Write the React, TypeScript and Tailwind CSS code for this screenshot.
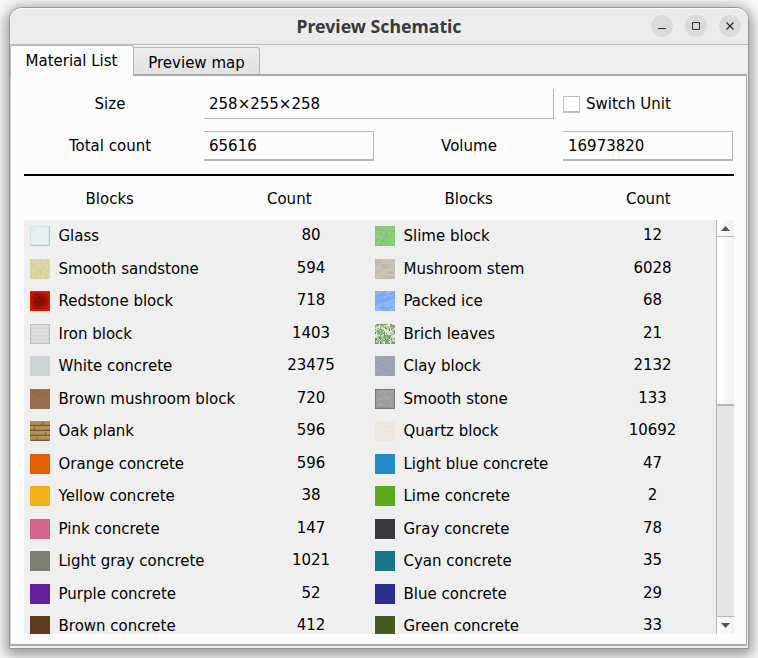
import React from "react";

type Texture = { palette: string[]; sx?: number; sy?: number; slant?: number; border?: string; kind?: string };
type Block = { name: string; count: number; color: string; texture?: Texture };

const left: Block[] = [
  { name: "Glass", count: 80, color: "#eceff0", texture: { palette: ["#eceff0"], kind: "glass" } },
  { name: "Smooth sandstone", count: 594, color: "#dfd4a6", texture: { palette: ["#e1d7a9", "#ddd2a2", "#d8cb98", "#dfd5a5"], sx: 2, sy: 2 } },
  { name: "Redstone block", count: 718, color: "#b81404", texture: { palette: ["#a81204", "#980f04", "#b41405", "#8c0e05"], kind: "redstone" } },
  { name: "Iron block", count: 1403, color: "#dedede", texture: { palette: ["#e2e2e2"], kind: "iron" } },
  { name: "White concrete", count: 23475, color: "#cfd5d6" },
  { name: "Brown mushroom block", count: 720, color: "#97704f", texture: { palette: ["#98705250", "#956d5050", "#9b755550", "#8f684c90"], sx: 2, sy: 2 } },
  { name: "Oak plank", count: 596, color: "#af8f55", texture: { palette: ["#b8945f"], kind: "plank" } },
  { name: "Orange concrete", count: 596, color: "#e06100" },
  { name: "Yellow concrete", count: 38, color: "#f0af15" },
  { name: "Pink concrete", count: 147, color: "#d5648e" },
  { name: "Light gray concrete", count: 1021, color: "#7d7d73" },
  { name: "Purple concrete", count: 52, color: "#641f9c" },
  { name: "Brown concrete", count: 412, color: "#603b1f" },
];

const right: Block[] = [
  { name: "Slime block", count: 12, color: "#8dcd7f", texture: { palette: ["#90d082", "#8aca7c", "#82c374", "#90d082"], sx: 2, border: "#86c977" } },
  { name: "Mushroom stem", count: 6028, color: "#c9c1b6", texture: { palette: ["#cdc6bb", "#c6beb2", "#c0b7ab", "#cac2b7"], sx: 5, sy: 2 } },
  { name: "Packed ice", count: 68, color: "#83adf8", texture: { palette: ["#78a5f5", "#82acfa", "#98bbfc", "#7da9f8"], slant: 1 } },
  { name: "Brich leaves", count: 21, color: "#c9d6c1", texture: { palette: ["#e9eee6", "#598447", "#7fa36d", "#eaeee7", "#6a9656"] } },
  { name: "Clay block", count: 2132, color: "#9da3b2", texture: { palette: ["#9ca2b3", "#989eb0", "#a3a9b8", "#9fa5b5"], sx: 2 } },
  { name: "Smooth stone", count: 133, color: "#a0a0a0", texture: { palette: ["#a2a2a2", "#a7a7a7", "#9c9c9c"], sx: 3, border: "#737373" } },
  { name: "Quartz block", count: 10692, color: "#ede6df", texture: { palette: ["#eee8e2", "#ece4dc", "#f0e9e4"], slant: 1 } },
  { name: "Light blue concrete", count: 47, color: "#2389c7" },
  { name: "Lime concrete", count: 2, color: "#5ea919" },
  { name: "Gray concrete", count: 78, color: "#373a3e" },
  { name: "Cyan concrete", count: 35, color: "#157788" },
  { name: "Blue concrete", count: 29, color: "#2d2f8f" },
  { name: "Green concrete", count: 33, color: "#495b24" },
];

function noise(x: number, y: number) {
  let n = Math.imul(x + 11, 374761393) + Math.imul(y + 7, 668265263);
  n = Math.imul(n ^ (n >>> 13), 1274126177);
  return (n ^ (n >>> 16)) >>> 0;
}

function pixelColor(t: Texture, x: number, y: number) {
  const edge = x === 0 || y === 0 || x === 15 || y === 15;
  if (t.kind === "glass") {
    if (x === 15 || y === 15) return "#9fc9d0";
    if (edge) return "#c3e6ea";
    if ((x + y === 5 && x > 1 && y > 1) || (x + y === 26 && x > 12)) return "#cbe3e6";
    return "#eceff0";
  }
  if (t.kind === "iron") {
    if (edge) return "#b9b9b9";
    return y % 3 === 0 ? "#cdcdcd" : "#e2e2e2";
  }
  if (t.kind === "redstone") {
    const d = Math.hypot(x - 7.5, y - 7.5) + (noise(x, y) % 3) * 0.6;
    if (edge) return "#e32008";
    if (d > 8.5) return "#d01a06";
    if (d > 7) return "#b81505";
    if (d > 5) return t.palette[noise(x, y) % 4];
    return noise(x, y) % 2 ? "#720d04" : "#861005";
  }
  if (t.kind === "plank") {
    if (y % 4 === 3) return "#6c532f";
    const seam = [10, 3, 12, 5][y >> 2];
    if (x === seam && y % 4 > 0) return "#806339";
    return ["#b9975b", "#ac8a50", "#b18e51"][noise(x >> 2, y) % 3];
  }
  if (edge && t.border) return t.border;
  if (t.slant) {
    return t.palette[noise(Math.floor((x + 2 * y) / 3), Math.floor((x - y + 16) / 6)) % t.palette.length];
  }
  return t.palette[noise(Math.floor(x / (t.sx ?? 1)), Math.floor(y / (t.sy ?? 1))) % t.palette.length];
}

function Swatch({ block }: { block: Block }) {
  const { texture } = block;
  return (
    <svg width="20" height="20" viewBox="0 0 16 16" className="block shrink-0">
      <rect width="16" height="16" fill={block.color} />
      {texture &&
        Array.from({ length: 256 }, (_, i) => (
          <rect key={i} x={i % 16} y={i >> 4} width="1.02" height="1.02" fill={pixelColor(texture, i % 16, i >> 4)} />
        ))}
    </svg>
  );
}

function Cell({ block, countWidth }: { block: Block; countWidth: string }) {
  return (
    <div className="flex w-[345px] shrink-0 items-start">
      <Swatch block={block} />
      <span className="ml-[8.5px] w-[192.5px] leading-5">{block.name}</span>
      <span className={`-mt-px text-center leading-5 ${countWidth}`}>{block.count}</span>
    </div>
  );
}

function WindowButton({ children }: { children: React.ReactNode }) {
  return (
    <button className="flex size-[22px] items-center justify-center rounded-full bg-[#dadada]">
      <svg width="22" height="22" viewBox="0 0 22 22" fill="none" stroke="#303030">{children}</svg>
    </button>
  );
}

const field = "flex h-[30px] items-center border-[#b6b6b6] pl-[5px]";

export default function App() {
  return (
    <div className="h-[658px] w-[758px] overflow-hidden bg-[#fafafa] pl-[9px] pt-[7px] font-['DejaVu_Sans',sans-serif] text-[15px] text-black">
      <div className="flex h-[642px] w-[740px] flex-col rounded-t-[13px] border border-[#969696] bg-[#efefef] shadow-[0_3px_14px_3px_rgba(0,0,0,0.42)]">
        <header className="flex h-[37px] shrink-0 items-center rounded-t-xl border-b border-[#b9b9b9] bg-[#ebebeb] shadow-[inset_0_1px_0_#fafafa]">
          <div className="w-[97px]" />
          <h1 className="flex-1 text-center font-['Noto_Sans',sans-serif] text-[17.7px] font-bold leading-6 text-[#3a3a3a]">Preview Schematic</h1>
          <div className="flex w-[97px] gap-3 pr-[7px]">
            <WindowButton><path d="M7 13.5h8" /></WindowButton>
            <WindowButton><path d="M7.5 7.5h7v7h-7z" /></WindowButton>
            <WindowButton><path d="m7.5 7.5 7 7m0-7-7 7" strokeWidth="1.3" /></WindowButton>
          </div>
        </header>

        <nav className="flex h-[29px] shrink-0 items-end">
          <div className="z-10 -mb-0.5 flex h-[31px] w-[124px] items-start rounded-t-[3px] border-l border-r border-t border-[#b5b5b5] bg-[#fcfcfc] pl-[14.5px] pt-[5px] leading-5">Material List</div>
          <div className="flex h-[27px] w-[126px] items-start justify-center rounded-tr-[3px] border-r border-t border-[#b9b9b9] bg-gradient-to-b from-[#ebebeb] to-[#e2e2e2] pt-[5px] leading-5">Preview map</div>
        </nav>

        <main className="mr-px flex h-[572px] shrink-0 flex-col border-b-2 border-l border-r border-t-2 border-b-[#a9a9a9] border-l-[#cccccc] border-r-[#a9a9a9] border-t-[#a9a9a9] bg-[#fcfcfc] pl-[13px] pr-3 pt-[13px]">
          <div className="grid w-[710px] grid-cols-[172px_171px_172px_171px] gap-x-2 gap-y-3">
            <div className="flex items-center justify-center">Size</div>
            <div className={`${field} col-span-2 mr-px border-b border-r pt-px`}>258×255×258</div>
            <label className="flex items-center">
              <span className="mr-[6px] size-[17px] border border-b-2 border-[#bebebe] bg-white" />
              Switch Unit
            </label>
            <div className="flex items-center justify-center">Total count</div>
            <div className={`${field} w-[170px] border-b-2 border-r border-t pt-0.5`}>65616</div>
            <div className="flex items-center justify-center">Volume</div>
            <div className={`${field} w-[170px] border-b-2 border-r border-t pt-0.5`}>16973820</div>
          </div>
          <div className="mt-[13px] h-0.5 w-[710px] shrink-0 bg-black" />
          <div className="grid h-11 w-[710px] shrink-0 grid-cols-4 items-center gap-2 pt-0.5 text-center">
            <span>Blocks</span><span>Count</span><span>Blocks</span><span>Count</span>
          </div>
          <div className="flex h-[414px] w-[710px] shrink-0 bg-[#efefef]">
            <div className="h-full w-[692px] overflow-hidden">
              {left.map((block, i) => (
                <div key={block.name} className={`flex items-start pl-1.5 pt-1.5 ${i % 2 ? "h-8" : "h-[33px]"}`}>
                  <Cell block={block} countWidth="w-[120px]" />
                  <Cell block={right[i]} countWidth="w-[113px]" />
                </div>
              ))}
            </div>
            <div className="flex w-[18px] flex-col border-l border-[#b6b6b6] bg-[#e5e5e5]">
              <div className="flex h-[17px] items-center justify-center border-b border-[#b6b6b6] bg-gradient-to-r from-[#fdfdfd] to-[#f1f1f1]">
                <svg width="9" height="5" viewBox="0 0 9 5"><path d="M4.5 0 9 5H0z" fill="#555" /></svg>
              </div>
              <div className="h-[169px] border-b-2 border-[#b6b6b6] bg-gradient-to-r from-white to-[#f1f1f1]" />
              <div className="flex-1" />
              <div className="flex h-[18px] items-center justify-center border-t border-[#b6b6b6] bg-gradient-to-r from-[#fdfdfd] to-[#f1f1f1]">
                <svg width="9" height="5" viewBox="0 0 9 5"><path d="M0 0h9L4.5 5z" fill="#555" /></svg>
              </div>
            </div>
          </div>
        </main>
      </div>
    </div>
  );
}
